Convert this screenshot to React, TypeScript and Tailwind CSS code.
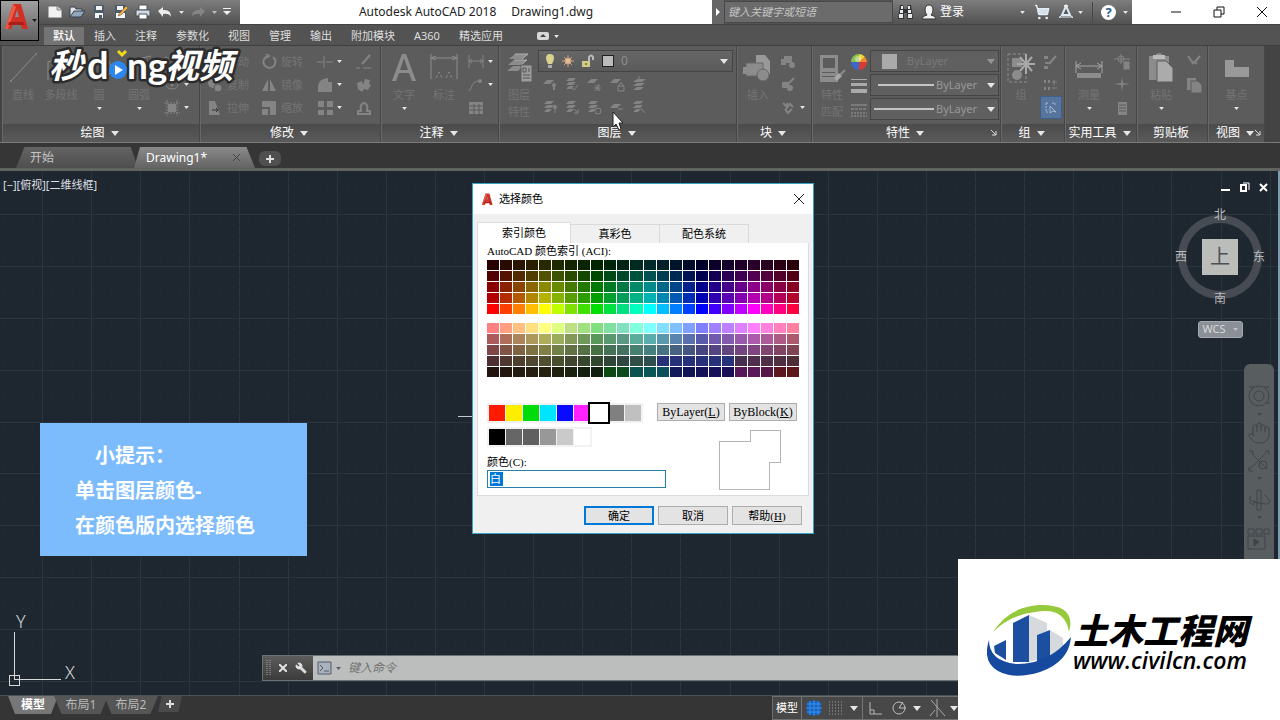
import React from 'react';
import { Hand, ShoppingCart, Wrench } from 'lucide-react';

const ui = 'font-["Noto_Sans","Noto_Sans_CJK_SC",sans-serif]';
const song = 'font-["Liberation_Serif","Noto_Sans_CJK_SC",serif]';

type IconName = keyof typeof icons;

const layerStack = (
  <g>
    <path d="M5 2h7l-3 3H2z" />
    <path d="M5 6h7l-3 3H2z" />
    <path d="M5 10h5l-3 3H2z" />
  </g>
);

// 16 x 16 drawings, filled with the current text colour
const icons = {
  ellipse: (
    <g fill="none" stroke="currentColor">
      <ellipse cx="8" cy="8" rx="6" ry="4" />
      <path d="M8 6v4M6 8h4" />
    </g>
  ),
  polyline: <path d="M1 3l5 2 2-3 7 6" fill="none" stroke="currentColor" />,
  hatch: (
    <g>
      <rect x="4" y="4" width="8" height="8" />
      <path d="M3 0v16M13 0v16M0 3h16M0 13h16" stroke="currentColor" strokeDasharray="2 1" />
    </g>
  ),
  move: <path d="M8 1l3 3H9v3h3V5l3 3-3 3V9H9v3h2l-3 3-3-3h2V9H4v2L1 8l3-3v2h3V4H5z" />,
  copy: (
    <g>
      <circle cx="6" cy="6" r="5" />
      <circle cx="11" cy="11" r="4" stroke="#5c5c5c" />
    </g>
  ),
  stretch: (
    <g>
      <path d="M2 1h6l5 14H2z" />
      <path d="M5 10h6m-2-2l2 2-2 2" stroke="#333" fill="none" />
    </g>
  ),
  rotate: <path d="M12 3a6 6 0 1 1-5-1M5 0l3 2-3 2" fill="none" stroke="currentColor" strokeWidth="2" />,
  mirror: (
    <g>
      <path d="M7 2v12H1z" />
      <path d="M9 2v12h6z" />
    </g>
  ),
  scale: (
    <g>
      <path d="M1 1h14v14H9V7H1z" />
      <rect x="1" y="9" width="6" height="6" />
    </g>
  ),
  trim: <path d="M0 8h7M9 8h7M7 2v12" fill="none" stroke="currentColor" />,
  fillet: <path d="M1 15V9q1-7 9-8h1v4h4v10z" />,
  array: <path d="M1 1h6v6H1zM10 1h6v6h-6zM1 10h6v5H1zM10 10h6v5h-6z" />,
  erase: (
    <g fill="none" stroke="currentColor">
      <path d="M6 10l8-9" strokeWidth="2" />
      <path d="M0 14h4M7 14h8" />
    </g>
  ),
  explode: <path d="M1 6l5-2 1 4 2-6 5 1-1 4 2 1-3 5-4-1-2 3-4-3z" />,
  offset: (
    <g fill="none" stroke="currentColor" strokeWidth="2">
      <path d="M2 14h12v-3h-3q1-5-1-7-2-2-4 0-2 2-1 7H2z" />
    </g>
  ),
  dimension: (
    <g fill="none" stroke="currentColor">
      <path d="M1 1v13M15 1v13M1 7h14M4 5L1 7l3 2M12 5l3 2-3 2" />
    </g>
  ),
  leader: (
    <g>
      <path d="M1 14l2-3q2-7 8-7" fill="none" stroke="currentColor" />
      <circle cx="12" cy="4" r="2" />
    </g>
  ),
  table: (
    <g>
      <rect x="1" y="2" width="14" height="12" />
      <path d="M1 6h14M1 10h14M6 4v10M11 4v10" stroke="#5c5c5c" />
    </g>
  ),
  layerOff: (
    <g>
      <path d="M5 4h7l-4 4H1z" />
      <circle cx="12" cy="9" r="2" />
      <path d="M12 9v5" stroke="currentColor" strokeWidth="2" />
    </g>
  ),
  layerIso: (
    <g>
      {layerStack}
      <path d="M8 12l2 2 4-5" fill="none" stroke="currentColor" />
    </g>
  ),
  layerFreeze: (
    <g>
      <path d="M5 3h7l-4 4H1z" />
      <path d="M8 12h7M12 8v7M9 9l5 6M14 9l-5 6" stroke="currentColor" />
    </g>
  ),
  layerLock: (
    <g>
      <path d="M5 3h7l-4 4H1z" />
      <path d="M9 10h6v5H9zM10 10q0-3 2-3t2 3" fill="none" stroke="currentColor" />
    </g>
  ),
  layerCurrent: (
    <g>
      <path d="M6 3h9l-4 3H2zM6 7h8l-4 3H2zM6 11h7l-4 3H2z" />
      <path d="M8 0v5M6 3l2 2 2-2" stroke="currentColor" fill="none" />
    </g>
  ),
  layerOn: (
    <g>
      {layerStack}
      <circle cx="13" cy="8" r="2" />
      <path d="M13 8v6" stroke="currentColor" />
    </g>
  ),
  layerUniso: (
    <g>
      {layerStack}
      <path d="M10 10l4 4m0-4v4h-4" stroke="currentColor" fill="none" />
    </g>
  ),
  layerThaw: (
    <g>
      {layerStack}
      <circle cx="12" cy="12" r="3" fill="#5c5c5c" stroke="currentColor" />
    </g>
  ),
  layerUnlock: (
    <g>
      <path d="M5 5h7l-4 4H1z" />
      <path d="M9 10h5" stroke="currentColor" />
    </g>
  ),
  layerMatch: (
    <g>
      {layerStack}
      <path d="M10 9l4 5" stroke="currentColor" />
    </g>
  ),
  blockCreate: (
    <g>
      <path d="M4 2h8v7H4z" />
      <path d="M1 5h5v6H1z" />
      <circle cx="12" cy="11" r="3" />
    </g>
  ),
  blockEdit: (
    <g>
      <path d="M2 5h7v6H2z" />
      <circle cx="10" cy="11" r="3" />
      <path d="M8 7l6-6" stroke="currentColor" strokeWidth="2" />
    </g>
  ),
  blockAttr: (
    <path d="M3 3l3 3 2-3M6 9l4-5 3 3M5 9l3 4 4-4" fill="none" stroke="currentColor" strokeWidth="2" />
  ),
  groupEdit: (
    <g>
      <path d="M2 2h4v3H2zM3 8h6v2H3zM2 12h4v3H2z" />
      <path d="M7 10l7-8" stroke="currentColor" strokeWidth="2" />
    </g>
  ),
  groupAdd: (
    <g>
      <path d="M2 3h2v3H2zM2 10h2v3H2zM6 3h2v3H6zM6 10h2v3H6z" />
      <path d="M10 5h5M12 3v5M10 11h5" stroke="currentColor" />
    </g>
  ),
  groupSelect: (
    <g fill="none" stroke="#a5b9d3">
      <path d="M3 3h3M3 3v9M3 12h3M9 3h3v3" strokeDasharray="2 1" />
      <path d="M7 6l6 6-3-1-3 2z" />
    </g>
  ),
  quickSelect: (
    <g fill="none" stroke="currentColor">
      <circle cx="7" cy="5" r="3" />
      <path d="M0 5h16M7 0v10" />
      <rect x="10" y="8" width="5" height="7" fill="currentColor" />
    </g>
  ),
  idPoint: <path d="M8 0l1 6 7 1-7 1-1 7-1-7-7-1 7-1z" />,
  calculator: (
    <g>
      <path d="M4 2h9v13H4z" />
      <path d="M5 5h7M5 8h7M5 11h7" stroke="#5c5c5c" />
    </g>
  ),
  cut: <path d="M2 2l5 7M14 2L8 9M6 10l2-2 3 2" fill="none" stroke="currentColor" strokeWidth="2" />,
  pages: (
    <g>
      <path d="M1 1h9v12H1z" />
      <path d="M5 4h7l4 4v8H5z" stroke="#5c5c5c" />
    </g>
  ),
};

function Caret({ big = false, className = '' }: { big?: boolean; className?: string }) {
  return (
    <svg className={`${big ? 'h-[5px] w-2' : 'h-[3px] w-[5px]'} shrink-0 ${className}`} viewBox="0 0 8 5" fill="#e6e6e6">
      <path d="M0 0h8L4 5z" />
    </svg>
  );
}

interface ToolProps {
  name: IconName;
  label?: string;
  caret?: boolean;
  active?: boolean;
}

function Tool({ name, label, caret, active }: ToolProps) {
  return (
    <button
      aria-label={label ?? name}
      className={`flex h-[23px] items-center gap-1 px-[2px] ${active ? 'border border-[#3c5f8f] bg-[#57759c]' : ''}`}
    >
      <svg className="size-4 shrink-0 text-[#848484]" viewBox="0 0 16 16" fill="currentColor">
        {icons[name]}
      </svg>
      {label && <span className="text-[11px] leading-4 whitespace-nowrap text-[#747474]">{label}</span>}
      {caret && <Caret />}
    </button>
  );
}

interface BigToolProps {
  lines: string[];
  caret?: boolean;
  width?: string;
  children: React.ReactNode;
}

function BigTool({ lines, caret, width = 'w-10', children }: BigToolProps) {
  return (
    <button className={`flex flex-col items-center ${width} shrink-0 pt-[6px]`}>
      <svg className="mb-[2px] size-8 text-[#8c8c8c]" viewBox="0 0 32 32" fill="currentColor">
        {children}
      </svg>
      {lines.map((line) => (
        <span key={line} className="text-[11px] leading-[17px] whitespace-nowrap text-[#747474]">
          {line}
        </span>
      ))}
      {caret && <Caret className="mt-1" />}
    </button>
  );
}

interface PanelProps {
  title: string;
  width: string;
  noCaret?: boolean;
  launcher?: boolean;
  children: React.ReactNode;
}

function Panel({ title, width, noCaret, launcher, children }: PanelProps) {
  return (
    <section className={`flex ${width} shrink-0 flex-col border-r border-[#464646] border-l border-l-[#686868] bg-[#5c5c5c]`}>
      <div className="flex h-[78px] overflow-hidden">{children}</div>
      <div className="grid h-[18px] grid-cols-[1fr_auto_1fr] items-center bg-linear-to-b from-[#4b4b4b] to-[#5a5a5a] pr-[3px] text-xs leading-4 whitespace-nowrap text-white">
        <span />
        <span className="flex items-center gap-[6px]">
          {title}
          {!noCaret && <Caret big />}
        </span>
        {launcher && (
          <svg className="size-[6px] justify-self-end" viewBox="0 0 6 6" fill="none" stroke="#ddd">
            <path d="M0 0l5 5M5 1v4H1" />
          </svg>
        )}
      </div>
    </section>
  );
}

function Column({ children, className = '' }: { children: React.ReactNode; className?: string }) {
  return <div className={`flex shrink-0 flex-col items-start pt-1 ${className}`}>{children}</div>;
}

function RedA({ className }: { className: string }) {
  return (
    <svg className={className} viewBox="0 0 24 28">
      <path d="M8 1h8l7 25h-6l-2-7H9l-3 7H0z" fill="#cf2f24" />
      <path d="M12 7l-2 7h4z" fill="#8d8d8d" />
      <path d="M8 1L0 26h3L11 4z" fill="#ee5a45" />
      <path d="M4 19h14l2 3H3z" fill="#a91e17" />
    </svg>
  );
}

function QuickAccess() {
  return (
    <div className="flex w-[201px] shrink-0 items-center gap-[6px] bg-linear-to-b from-[#7d7d7d] to-[#525252] pl-2">
      <button aria-label="新建">
        <svg className="size-4" viewBox="0 0 16 16">
          <path d="M1 2h9l5 4v8H1z" fill="#f2f2f2" stroke="#666" />
          <path d="M10 2v4h5" fill="#ccc" stroke="#888" />
        </svg>
      </button>
      <button aria-label="打开">
        <svg className="size-4" viewBox="0 0 16 16">
          <path d="M1 13V3h5l1 2h6v3" fill="#dfe4e8" stroke="#333f4c" />
          <path d="M1 13l4-6h11l-4 6z" fill="#8fa6bd" stroke="#333f4c" />
        </svg>
      </button>
      <button aria-label="保存">
        <svg className="size-4" viewBox="0 0 16 16">
          <path d="M3 1h10v14H3z" fill="#4b5b6c" />
          <path d="M5 2h6v4H5zM4 9h8v5H4z" fill="#f4f4f4" />
          <path d="M8 11h3v3H8z" fill="#4b5b6c" />
        </svg>
      </button>
      <button aria-label="另存为">
        <svg className="size-4" viewBox="0 0 16 16">
          <path d="M2 1h11v14H2z" fill="#4b5b6c" />
          <path d="M4 2h6v4H4zM3 9h9v5H3z" fill="#f4f4f4" />
          <path d="M6 10l7-8 2 2-7 7-3 1z" fill="#f0b64c" stroke="#6b4a14" strokeWidth="0.5" />
        </svg>
      </button>
      <button aria-label="打印">
        <svg className="size-4" viewBox="0 0 16 16">
          <path d="M4 1h8v5H4z" fill="#fff" stroke="#555" />
          <path d="M1 6h14v6H1z" fill="#d4dbe2" stroke="#46525f" />
          <path d="M4 10h8v5H4z" fill="#fff" stroke="#46525f" />
        </svg>
      </button>
      <button aria-label="放弃">
        <svg className="size-4" viewBox="0 0 16 16">
          <path d="M1 7l5-4v3q8-1 8 7-2-4-8-3v3z" fill="#ececec" />
        </svg>
      </button>
      <Caret />
      <button aria-label="重做">
        <svg className="size-4" viewBox="0 0 16 16">
          <path d="M15 7l-5-4v3q-8-1-8 7 2-4 8-3v3z" fill="#858585" />
        </svg>
      </button>
      <Caret className="opacity-70" />
      <button aria-label="自定义">
        <svg className="h-2 w-2" viewBox="0 0 8 8" fill="#f0f0f0">
          <path d="M0 0h8v1H0zM0 3h8L4 7z" />
        </svg>
      </button>
    </div>
  );
}

function InfoCenter() {
  return (
    <div className="flex w-[239px] shrink-0 items-center bg-linear-to-b from-[#7d7d7d] to-[#525252] pl-[5px] text-xs text-white">
      <svg className="h-4 w-[15px]" viewBox="0 0 15 16">
        <path d="M2 1h3l1 4h3l1-4h3l2 14H9V9H6v6H0z" fill="#2e3338" />
        <path d="M3 2h2v3H3zM10 2h2v3h-2zM1 10h4v4H1zM10 10h4v4h-4zM2 6h3v3H2zM10 6h3v3h-3z" fill="#e9e9e9" />
      </svg>
      <button className="ml-2 flex items-center gap-[3px]">
        <svg className="size-4" viewBox="0 0 16 16" fill="#f2f2f2" stroke="#333">
          <path d="M1 15q0-3 5-4-2-2-2-5 0-5 4-5t4 5q0 3-2 5 5 1 5 4z" />
        </svg>
        <span>登录</span>
      </button>
      <Caret className="ml-auto" />
      <button aria-label="应用商店" className="ml-[9px]">
        <ShoppingCart className="size-4" fill="#d5e0ea" stroke="#e4ecf3" strokeWidth={2} />
      </button>
      <svg className="ml-2 size-4" viewBox="0 0 16 16" fill="#4d5b68" stroke="#dfe8ef" strokeWidth="2">
        <path d="M8 2l4 9H4z" />
        <path d="M1 14l4-4M15 14l-4-4M1 13h14" strokeWidth="1" />
        <path d="M6 2h4" />
      </svg>
      <Caret className="ml-1" />
      <span className="ml-[9px] h-5 w-px bg-[#484848]" />
      <button
        aria-label="帮助"
        className="ml-2 size-[15px] rounded-full bg-white text-center text-[13px] leading-[15px] font-bold text-[#2a5d8f]"
      >
        ?
      </button>
      <Caret className="mr-1 ml-[7px]" />
    </div>
  );
}

function WindowControls() {
  return (
    <div className="flex w-[148px] shrink-0 items-center justify-between bg-white pr-1 pl-[38px]">
      <button aria-label="最小化">
        <svg className="size-3" viewBox="0 0 12 12" stroke="#111">
          <path d="M1 6h10" />
        </svg>
      </button>
      <button aria-label="还原">
        <svg className="size-3" viewBox="0 0 12 12" stroke="#111" fill="none">
          <path d="M1 4h7v7H1zM4 4V1h7v7H8" />
        </svg>
      </button>
      <button aria-label="关闭" className="mr-2">
        <svg className="size-3" viewBox="0 0 12 12" stroke="#111">
          <path d="M1 1l10 10M11 1L1 11" />
        </svg>
      </button>
    </div>
  );
}

const menuTabs = ['默认', '插入', '注释', '参数化', '视图', '管理', '输出', '附加模块', 'A360', '精选应用'];

function Header() {
  return (
    <header className="flex bg-[#535353]">
      <button
        aria-label="应用程序菜单"
        className="flex h-[41px] w-[39px] shrink-0 items-center gap-[3px] border border-black bg-linear-to-b from-[#a0a0a0] to-[#616161] pl-1"
      >
        <RedA className="mb-2 h-7 w-6" />
        <Caret className="invert" />
      </button>
      <div className="flex min-w-0 flex-1 flex-col">
        <div className="flex h-6">
          <QuickAccess />
          <h1 className="flex min-w-0 flex-1 items-center justify-center gap-[15px] overflow-hidden bg-white text-xs whitespace-nowrap text-[#222]">
            <span>Autodesk AutoCAD 2018</span>
            <span>Drawing1.dwg</span>
          </h1>
          <button aria-label="展开" className="flex w-3 shrink-0 items-center justify-center bg-[#666]">
            <svg className="h-2 w-1" viewBox="0 0 4 8" fill="#fff">
              <path d="M0 0l4 4-4 4z" />
            </svg>
          </button>
          <input
            aria-label="搜索"
            placeholder="键入关键字或短语"
            className="my-px w-[169px] shrink-0 border border-[#484848] bg-[#6b6b6b] px-[3px] text-[11px] italic placeholder:text-[#c4c4c4]"
          />
          <InfoCenter />
          <WindowControls />
        </div>
        <nav className="flex h-[21px] items-end gap-px border-t border-[#444] pl-[5px] text-[11px] text-[#dedede]">
          {menuTabs.map((tab, i) => (
            <button
              key={tab}
              className={`h-[18px] px-[9px] leading-4 whitespace-nowrap ${i === 0 ? 'bg-[#747474] font-medium text-white' : ''}`}
            >
              {tab}
            </button>
          ))}
          <button aria-label="功能区" className="ml-6 flex h-[18px] items-center gap-[5px]">
            <svg className="h-2 w-3" viewBox="0 0 12 8">
              <rect width="12" height="8" rx="2" fill="#d8d8d8" />
              <path d="M3 5l3-3 3 3z" fill="#444" />
            </svg>
            <Caret />
          </button>
        </nav>
      </div>
    </header>
  );
}

function PropertySelect({ kind }: { kind: 'color' | 'weight' | 'line' }) {
  return (
    <div className="flex h-[22px] w-[129px] items-center border border-[#444] bg-[#606060] px-[3px]">
      {kind === 'color' && <span className="mr-2 ml-2 size-[15px] bg-[#aaa]" />}
      {kind === 'weight' && <span className="ml-1 h-[2px] w-14 bg-[#c4c4c4]" />}
      {kind === 'line' && <span className="h-[2px] w-15 bg-[#c4c4c4]" />}
      <select
        aria-label={kind}
        className={`min-w-0 flex-1 appearance-none bg-transparent px-[2px] text-[11px] leading-4 ${
          kind === 'color' ? 'text-[#797979]' : 'text-[#989898]'
        }`}
      >
        <option>ByLayer</option>
      </select>
      <Caret big className={kind === 'color' ? 'opacity-40' : ''} />
    </div>
  );
}

function Ribbon() {
  return (
    <div className="flex h-[98px] overflow-hidden border-t border-b border-t-[#3f3f3f] border-b-[#7b7b7b] bg-[#444] pl-[2px]">
      <Panel title="绘图" width="w-[198px]">
        <BigTool lines={['直线']}>
          <path d="M5 28L28 3" stroke="currentColor" />
          <circle cx="4" cy="29" r="1" />
          <circle cx="29" cy="2" r="1" />
        </BigTool>
        <BigTool lines={['多段线']} width="w-9">
          <path d="M3 28V10l12-4 3 12 10-4" fill="none" stroke="currentColor" />
        </BigTool>
        <BigTool lines={['圆']} caret>
          <circle cx="16" cy="16" r="12" fill="none" stroke="currentColor" />
        </BigTool>
        <BigTool lines={['圆弧']} caret>
          <path d="M4 28Q6 6 28 4" fill="none" stroke="currentColor" />
        </BigTool>
        <Column className="pl-[3px]">
          <Tool name="polyline" caret />
          <Tool name="ellipse" caret />
          <Tool name="hatch" caret />
        </Column>
      </Panel>

      <Panel title="修改" width="w-[181px]">
        <Column className="pl-1">
          <Tool name="move" label="移动" />
          <Tool name="copy" label="复制" />
          <Tool name="stretch" label="拉伸" />
        </Column>
        <Column className="pl-2">
          <Tool name="rotate" label="旋转" />
          <Tool name="mirror" label="镜像" />
          <Tool name="scale" label="缩放" />
        </Column>
        <Column className="pl-[10px]">
          <Tool name="trim" caret />
          <Tool name="fillet" caret />
          <Tool name="array" caret />
        </Column>
        <Column className="pl-[10px]">
          <Tool name="erase" />
          <Tool name="explode" />
          <Tool name="offset" />
        </Column>
      </Panel>

      <Panel title="注释" width="w-[118px]">
        <BigTool lines={['文字']} caret width="w-11">
          <path d="M14 2h4l10 27h-4l-3-8H11l-3 8H4zM16 6l-4 12h8z" fillRule="evenodd" />
        </BigTool>
        <BigTool lines={['标注']} width="w-9">
          <path d="M3 2v25M29 2v25M3 6h26M8 4L3 6l5 2M24 4l5 2-5 2" fill="none" stroke="currentColor" />
          <path d="M8 26l3-6 3 6M18 26l3-6 3 6" fill="none" stroke="currentColor" strokeDasharray="3 2" />
        </BigTool>
        <Column className="pl-1">
          <Tool name="dimension" caret />
          <Tool name="leader" caret />
          <Tool name="table" />
        </Column>
      </Panel>

      <Panel title="图层" width="w-[238px]">
        <BigTool lines={['图层', '特性']} width="w-[38px]">
          <path d="M12 2h13l-6 5H6zM11 8h13l-6 5H5zM10 14h10l-5 5H4z" />
          <path d="M12 2h13l-6 5M11 8h13l-6 5" fill="none" stroke="#b0b0b0" />
          <rect x="18" y="13" width="11" height="17" fill="#9c9c9c" stroke="#5c5c5c" />
          <path d="M20 16h3v4h-3zM26 16v4M20 23h7M20 26h7" stroke="#555" fill="none" />
        </BigTool>
        <div className="flex flex-1 flex-col pt-1 pr-[3px]">
          <div className="flex h-[22px] items-center gap-[7px] border border-[#444] bg-linear-to-b from-[#666] to-[#5a5a5a] pr-1 pl-[6px]">
            <svg className="h-4 w-[10px]" viewBox="0 0 10 16">
              <path d="M1 5a4 4 0 0 1 8 0q0 2-2 6H3Q1 7 1 5z" fill="#d9d38f" />
              <path d="M3 12h4v3H3z" fill="#aaa" />
            </svg>
            <svg className="size-3" viewBox="0 0 12 12" stroke="#c9a182">
              <path d="M6 0v12M0 6h12M2 2l8 8M10 2l-8 8" />
              <circle cx="6" cy="6" r="3" fill="#e3ba93" />
            </svg>
            <svg className="h-4 w-[14px]" viewBox="0 0 14 16">
              <path d="M1 8h8v6H1z" fill="#cfcc86" />
              <path d="M8 8V4q2-3 4 0v3" fill="none" stroke="#bbb" strokeWidth="2" />
              <path d="M5 10v2" stroke="#333" />
            </svg>
            <span className="size-3 border border-[#222] bg-[#bbb]" />
            <select aria-label="图层" className="min-w-0 flex-1 appearance-none bg-transparent text-xs leading-4 text-[#8d8d8d]">
              <option>0</option>
            </select>
            <Caret big />
          </div>
          <div className="grid w-[113px] grid-cols-5 pl-[2px]">
            <Tool name="layerOff" />
            <Tool name="layerIso" />
            <Tool name="layerFreeze" />
            <Tool name="layerLock" />
            <Tool name="layerCurrent" />
            <Tool name="layerOn" />
            <Tool name="layerUniso" />
            <Tool name="layerThaw" />
            <Tool name="layerUnlock" />
            <Tool name="layerMatch" />
          </div>
        </div>
      </Panel>

      <Panel title="块" width="w-[75px]">
        <BigTool lines={['插入']}>
          <path d="M14 3h9l5 6v13H14z" fill="#999" />
          <path d="M4 11h17v13H4z" stroke="#666" />
          <path d="M1 15h5v7H1z" />
          <circle cx="21" cy="23" r="6" stroke="#666" />
        </BigTool>
        <Column>
          <Tool name="blockCreate" />
          <Tool name="blockEdit" />
          <Tool name="blockAttr" caret />
        </Column>
      </Panel>

      <Panel title="特性" width="w-[189px]" launcher>
        <BigTool lines={['特性', '匹配']} width="w-[38px]">
          <path d="M4 3h18v27H4zM7 6v10h12V6zM6 20h13v1H6zM6 24h13v1H6z" fillRule="evenodd" />
          <path d="M18 26l5-5 3 3-5 5z" fill="#aaa" />
          <path d="M24 23l5-5" stroke="currentColor" strokeWidth="2" />
        </BigTool>
        <div className="flex flex-col items-center gap-2 pt-2 pr-[3px]">
          <svg className="size-4" viewBox="0 0 16 16">
            <path d="M8 8V0a8 8 0 0 0-8 8z" fill="#8bc34a" />
            <path d="M8 8V0a8 8 0 0 1 6 3z" fill="#f4d63c" />
            <path d="M8 8l6-5a8 8 0 0 1 2 5z" fill="#f08a2c" />
            <path d="M8 8h8a8 8 0 0 1-8 8z" fill="#d63b34" />
            <path d="M8 8v8a8 8 0 0 1-8-8z" fill="#3b67c9" />
            <circle cx="7" cy="5" r="3" fill="#fff" opacity="0.4" />
          </svg>
          <svg className="size-4" viewBox="0 0 16 16" fill="#aaa">
            <path d="M0 1h16v1H0zM0 5h16v3H0zM0 11h16v4H0z" />
          </svg>
          <svg className="size-4" viewBox="0 0 16 16" stroke="#999">
            <path d="M0 3h16" />
            <path d="M0 7h16" strokeDasharray="3 1" />
            <path d="M0 11h16M0 14h16" strokeDasharray="2 1" />
          </svg>
        </div>
        <div className="flex flex-col gap-[2px] pt-1">
          <PropertySelect kind="color" />
          <PropertySelect kind="weight" />
          <PropertySelect kind="line" />
        </div>
      </Panel>

      <Panel title="组" width="w-16">
        <BigTool lines={['组']} width="w-[38px]">
          <path d="M3 2h18v28H3z" fill="none" stroke="currentColor" strokeDasharray="3 2" />
          <path d="M7 6h10v9H7z" />
          <circle cx="12" cy="23" r="5" />
          <path d="M12 12h18M21 2v20M15 5l12 14M27 5L15 19" stroke="#a9a9a9" strokeWidth="2" />
        </BigTool>
        <Column>
          <Tool name="groupEdit" />
          <Tool name="groupAdd" />
          <Tool name="groupSelect" active />
        </Column>
      </Panel>

      <Panel title="实用工具" width="w-[72px]">
        <BigTool lines={['测量']} caret width="w-[46px]">
          <path d="M3 9v12M29 9v12M3 14h26M8 11l-5 3 5 3M24 11l5 3-5 3" fill="none" stroke="#a5a5a5" />
          <path d="M4 21h24v5H4z" />
        </BigTool>
        <Column>
          <Tool name="quickSelect" />
          <Tool name="idPoint" />
          <Tool name="calculator" />
        </Column>
      </Panel>

      <Panel title="剪贴板" width="w-[71px]" noCaret>
        <BigTool lines={['粘贴']} caret width="w-[46px]">
          <path d="M4 4h6q1-3 4-3t4 3h6v24H4z" />
          <path d="M8 3h12v4H8z" fill="#bbb" />
          <path d="M12 9h9l7 7v14H12z" fill="#ababab" stroke="#5c5c5c" />
        </BigTool>
        <Column>
          <Tool name="cut" />
          <Tool name="pages" />
        </Column>
      </Panel>

      <Panel title="视图" width="w-[57px]" launcher>
        <BigTool lines={['基点']} caret width="w-[55px]">
          <path d="M4 8h9v7h15v10H4z" fill="#999" />
        </BigTool>
      </Panel>
    </div>
  );
}

function FileTabs() {
  return (
    <div className="flex h-7 items-end border-b-3 border-[#61635f] bg-[#363636] pl-4 text-xs text-[#c5c5c5]">
      <button className="h-[21px] w-[122px] bg-linear-to-b from-[#646464] to-[#4e4e4e] pl-[14px] text-left leading-5 [clip-path:polygon(7%_0,94%_0,100%_100%,0_100%)]">
        开始
      </button>
      <div className="-ml-1 flex h-[21px] w-[121px] items-center bg-linear-to-b from-[#8a8a8a] to-[#646464] pr-[15px] pl-3 text-white [clip-path:polygon(5%_0,93%_0,100%_100%,0_100%)]">
        <button>Drawing1*</button>
        <button aria-label="关闭图形" className="ml-auto">
          <svg className="size-[7px]" viewBox="0 0 7 7" stroke="#444">
            <path d="M0 0l7 7M7 0L0 7" />
          </svg>
        </button>
      </div>
      <button aria-label="新图形" className="mb-[2px] ml-1 flex h-[15px] w-[22px] items-center justify-center rounded-md bg-[#505050]">
        <svg className="size-2" viewBox="0 0 8 8" stroke="#ddd" strokeWidth="2">
          <path d="M0 4h8M4 0v8" />
        </svg>
      </button>
    </div>
  );
}

const gridX = Array.from({ length: 300 }, (_, i) => Math.round((i * 491) / 50) - 7);
const gridY = Array.from({ length: 150 }, (_, i) => Math.round((i * 519) / 50) - 9);

function DrawingGrid() {
  return (
    <svg className="absolute inset-0 h-full w-full" shapeRendering="crispEdges">
      {gridX.map((x, i) => (
        <rect key={x} x={x} y="0" width="1" height="100%" fill={i % 5 === 0 ? '#2b353e' : '#202931'} />
      ))}
      {gridY.map((y, i) => (
        <rect key={y} x="0" y={y} width="100%" height="1" fill={i % 5 === 0 ? '#2b353e' : '#202931'} />
      ))}
    </svg>
  );
}

function hsv(hue: number, sat: number, value: number) {
  const channel = (n: number) => {
    const k = (n + hue / 60) % 6;
    return Math.round(255 * value * (1 - sat * Math.max(0, Math.min(k, 4 - k, 1))));
  };
  const [r, g, b] = [channel(5), channel(3), channel(1)];
  // pure greens are shown a little darker
  const dim = hue > 75 && hue < 165 ? 0.88 : 1;
  return `rgb(${r}, ${Math.round(g * dim)}, ${b})`;
}

const hues = Array.from({ length: 24 }, (_, i) => i * 15);
const fullRows = [0.16, 0.32, 0.54, 0.7, 1];
const paleRows: [number, number][] = [
  [0.5, 1],
  [0.48, 0.68],
  [0.46, 0.5],
  [0.4, 0.31],
];
const lastRow = [
  ...['#22130f', '#22160f', '#241c10', '#261e10', '#26220f', '#20200f', '#1c2210', '#152010', '#122010'],
  ...['#0c4a14', '#0c4a1c', '#0b5350', '#0a5555', '#0b4f5a', '#121b58', '#121458', '#131158', '#151058', '#1b1058'],
  ...['#571858', '#5a1a5a', '#541646', '#5c1620', '#5c1818'],
];

function PaletteCells({ colors }: { colors: string[] }) {
  return (
    <>
      {colors.map((color, i) => (
        <button key={i} aria-label={color} className="h-[10px]" style={{ backgroundColor: color }} />
      ))}
    </>
  );
}

function Swatch({ color, selected }: { color: string; selected?: boolean }) {
  return (
    <button
      aria-label={color}
      className={`size-4 ${selected ? 'z-10 ring-1 ring-white outline-2 outline-offset-1 outline-black' : ''}`}
      style={{ backgroundColor: color }}
    />
  );
}

const mainSwatches = ['#ff1a00', '#ffee00', '#00dc0a', '#00e5ff', '#0a0aff', '#ff22ff', '#ffffff', '#808080', '#c0c0c0'];
const graySwatches = ['#000000', '#666666', '#606060', '#989898', '#cacaca', '#ffffff'];

function ColorDialog() {
  return (
    <div
      role="dialog"
      aria-label="选择颜色"
      className={`absolute top-[183px] left-[472px] w-[342px] border border-[#3aa3c4] bg-[#f0f0f0] text-[11px] text-black ${song}`}
    >
      <div className="flex h-[30px] items-center bg-white px-2">
        <RedA className="h-[13px] w-[13px]" />
        <span className={`ml-[5px] ${ui}`}>选择颜色</span>
        <button aria-label="关闭" className="ml-auto">
          <svg className="size-3" viewBox="0 0 12 12" stroke="#222">
            <path d="M1 1l10 10M11 1L1 11" />
          </svg>
        </button>
      </div>

      <div className="flex items-end px-1 pt-2 leading-[18px]">
        <button className="h-[21px] w-[94px] border border-b-0 border-[#dcdcdc] bg-white leading-4">索引颜色</button>
        <button className="h-[19px] w-[89px] border border-b-0 border-l-0 border-[#d9d9d9]">真彩色</button>
        <button className="h-[19px] w-[89px] border border-b-0 border-l-0 border-[#d9d9d9]">配色系统</button>
      </div>

      <div className="mx-1 h-[253px] border border-t-0 border-[#dcdcdc] bg-white pr-[11px] pl-[9px]">
        <p className="mb-px leading-4">AutoCAD 颜色索引 (ACI):</p>
        <div className="grid w-[312px] grid-cols-24 gap-px">
          {fullRows.map((value) => (
            <PaletteCells key={value} colors={hues.map((hue) => hsv(hue, 1, value))} />
          ))}
        </div>
        <div className="mt-[9px] grid w-[312px] grid-cols-24 gap-px">
          {paleRows.map(([sat, value], row) => (
            <PaletteCells
              key={value}
              colors={hues.map((hue, i) => (row === 3 && i > 12 && i < 19 ? '#26317a' : hsv(hue, sat, value)))}
            />
          ))}
          <PaletteCells colors={lastRow} />
        </div>

        <div className="mt-[26px] flex items-start justify-between">
          <div className="w-40">
            <div className="flex w-fit gap-px bg-[#f2f2f2] p-[2px]">
              {mainSwatches.map((color) => (
                <Swatch key={color} color={color} selected={color === '#ffffff'} />
              ))}
            </div>
            <div className="mt-1 flex w-fit gap-px bg-[#f2f2f2] p-[2px]">
              {graySwatches.map((color) => (
                <Swatch key={color} color={color} />
              ))}
            </div>
            <label htmlFor="color" className="mt-[7px] block leading-4">
              颜色(C):
            </label>
            <div className="flex h-[18px] w-[179px] items-center border border-[#2d7ea6] bg-white px-[2px]">
              <input id="color" defaultValue="白" className="h-[14px] w-[13px] bg-[#0078d7] text-[11px] text-white outline-none" />
            </div>
          </div>
          <div className="flex flex-col items-end">
            <div className="flex gap-1 text-xs">
              <button className="h-[18px] w-[68px] border border-[#adadad] bg-[#e3e3e3] leading-4">
                ByLayer(<u>L</u>)
              </button>
              <button className="h-[18px] w-[68px] border border-[#adadad] bg-[#e3e3e3] leading-4">
                ByBlock(<u>K</u>)
              </button>
            </div>
            <svg className="mt-2 mr-4 h-[61px] w-[63px]" viewBox="0 0 63 61" fill="none" stroke="#b5b5b5" shapeRendering="crispEdges">
              <path d="M1 12h31V1h30v32H51v27H1z" />
            </svg>
          </div>
        </div>
      </div>

      <div className="flex justify-end gap-1 pt-[10px] pr-[11px] pb-2">
        <button className="h-[19px] w-[70px] border-2 border-[#0078d7] bg-[#e3e3e3] leading-[14px]">确定</button>
        <button className="h-[19px] w-[70px] border border-[#adadad] bg-[#e3e3e3] leading-4">取消</button>
        <button className="h-[19px] w-[70px] border border-[#adadad] bg-[#e3e3e3] leading-4">
          帮助(<u>H</u>)
        </button>
      </div>
    </div>
  );
}

function ViewCube() {
  return (
    <div className="absolute top-[35px] right-3 flex w-[92px] flex-col items-center text-xs text-[#b8bbbd]">
      <div className="grid h-[102px] w-full grid-cols-[14px_1fr_14px] items-center justify-items-center">
        <span className="z-10">西</span>
        <div className="relative flex h-[102px] flex-col items-center justify-between leading-[18px]">
          <svg className="absolute top-[9px] left-1/2 size-[84px] -translate-x-1/2" viewBox="0 0 84 84">
            <circle cx="42" cy="42" r="38" fill="none" stroke="#474b53" strokeWidth="8" />
          </svg>
          <span className="z-10">北</span>
          <button className="z-10 size-9 bg-[#bbbdbb] text-xl leading-9 text-[#4c5054]">上</button>
          <span className="z-10">南</span>
        </div>
        <span className="z-10">东</span>
      </div>
      <button className="mt-[13px] flex h-[17px] w-[45px] items-center rounded-[3px] border border-[#a5a8ae] bg-[#8b8f97] px-1 text-[11px] text-[#d8d8d8]">
        WCS
        <Caret className="ml-auto opacity-60" />
      </button>
    </div>
  );
}

function NavigationBar() {
  return (
    <div className="absolute top-[193px] right-1 flex h-[214px] w-[30px] flex-col items-center rounded-md bg-[#585d60] pt-5 text-[#3f4448]">
      <svg className="size-6" viewBox="0 0 24 24" fill="none" stroke="currentColor">
        <circle cx="12" cy="12" r="10" />
        <circle cx="12" cy="12" r="5" />
        <path d="M2 3h5M17 3h5M19 19h4" />
      </svg>
      <Caret className="my-[5px] opacity-30 invert" />
      <Hand className="size-6" strokeWidth={1} />
      <svg className="mt-1 size-6" viewBox="0 0 24 24" fill="none" stroke="currentColor">
        <path d="M4 4l16 16M20 3L3 20" />
        <circle cx="16" cy="16" r="4" />
        <path d="M2 2h4v4M22 6V2h-4M2 18v4h4" />
      </svg>
      <Caret className="my-1 opacity-30 invert" />
      <svg className="mt-1 size-6" viewBox="0 0 24 24" fill="none" stroke="currentColor">
        <path d="M10 2h4v20h-4zM4 8q-6 4 8 7t10-3-5-5M2 14l4 3 2-4" />
      </svg>
      <Caret className="my-1 opacity-30 invert" />
      <svg className="mt-1 size-6" viewBox="0 0 24 24" fill="none" stroke="currentColor">
        <path d="M1 2h6v5H1zM9 2h6v5H9zM17 2h5v5h-5zM1 9h17v13H1z" />
        <path d="M7 12v7l5-4z" fill="currentColor" />
      </svg>
    </div>
  );
}

function CommandLine() {
  return (
    <div className="absolute right-0 bottom-[14px] left-[262px] flex h-[26px] items-center border border-[#6d7072] bg-[#bcbebd]">
      <div className="flex h-full w-[50px] items-center gap-2 bg-linear-to-b from-[#5c5c5c] to-[#3c3c3c] pl-[3px] text-[#e2e2e2]">
        <svg className="h-4 w-[5px]" viewBox="0 0 5 16" stroke="#a5a5a5">
          <path d="M1 0v16M4 0v16" strokeDasharray="1 1" />
        </svg>
        <svg className="size-2" viewBox="0 0 8 8" stroke="currentColor" strokeWidth="2">
          <path d="M0 0l8 8M8 0L0 8" />
        </svg>
        <Wrench className="size-3 -scale-x-100" fill="currentColor" />
      </div>
      <svg className="ml-1 h-[14px] w-4" viewBox="0 0 16 14" fill="none" stroke="#4e5c6e">
        <path d="M1 1h13v12H1z" fill="#a9b1ba" />
        <path d="M3 4l3 3-3 3M7 10h5" />
      </svg>
      <Caret className="ml-[3px] opacity-60 invert" />
      <input
        aria-label="命令"
        placeholder="键入命令"
        className="ml-[7px] min-w-0 flex-1 bg-transparent text-xs italic outline-none placeholder:text-[#6f7272]"
      />
    </div>
  );
}

function UcsIcon() {
  return (
    <svg className={`absolute bottom-[9px] left-2 h-[84px] w-20 ${ui}`} viewBox="0 0 80 84">
      <g fill="none" stroke="#d6d8da" shapeRendering="crispEdges">
        <path d="M6 30v47M6 77h47" />
        <rect x="1" y="73" width="10" height="10" />
      </g>
      <g fill="#d6d8da" fontSize="18" fontWeight="300">
        <text x="8" y="26">Y</text>
        <text x="57" y="77">X</text>
      </g>
    </svg>
  );
}

function Canvas() {
  return (
    <main className="relative flex-1 overflow-hidden border-r-2 border-[#7e9cb0] bg-[#1e272f]">
      <DrawingGrid />
      <p className="absolute top-[6px] left-[3px] text-[11px] leading-4 text-[#dcdfe1]">[−][俯视][二维线框]</p>
      <span className="absolute top-[245px] left-[458px] h-px w-14 bg-[#c5c9cc]" />
      <div className="absolute top-[11px] right-[10px] flex items-center gap-[9px] text-white">
        <svg className="size-[10px]" viewBox="0 0 10 10" stroke="currentColor" strokeWidth="2">
          <path d="M0 8h9" />
        </svg>
        <svg className="size-[10px]" viewBox="0 0 10 10" stroke="currentColor" fill="none">
          <path d="M1 3h5v6H1z" strokeWidth="2" />
          <path d="M3 1h6v7" />
        </svg>
        <svg className="size-[9px]" viewBox="0 0 9 9" stroke="currentColor" strokeWidth="2">
          <path d="M1 1l7 7M8 1L1 8" />
        </svg>
      </div>
      <ViewCube />
      <NavigationBar />
      <UcsIcon />
      <CommandLine />
      <aside className="absolute top-[252px] left-10 w-[267px] bg-[#7cbcfd] px-[35px] pt-[15px] pb-[13px] text-xl leading-[35px] font-bold whitespace-nowrap text-white">
        <p className="pl-5">小提示：</p>
        <p>单击图层颜色-</p>
        <p>在颜色版内选择颜色</p>
      </aside>
    </main>
  );
}

function StatusBar() {
  return (
    <footer className="flex h-[25px] items-start border-t border-[#4c5154] bg-[#353535] pl-2 text-xs text-[#b9b9b9]">
      {['模型', '布局1', '布局2'].map((tab, i) => (
        <button
          key={tab}
          className={`-mr-1 h-[18px] [clip-path:polygon(0_0,100%_0,86%_100%,14%_100%)] ${
            i === 0 ? 'w-[50px] bg-[#777] font-bold text-white' : 'w-[54px] bg-[#555]'
          }`}
        >
          {tab}
        </button>
      ))}
      <button
        aria-label="新建布局"
        className="ml-1 flex h-4 w-6 items-center justify-center bg-[#4a4a4a] [clip-path:polygon(15%_0,100%_0,85%_100%,0_100%)]"
      >
        <svg className="size-2" viewBox="0 0 8 8" stroke="#ddd" strokeWidth="2">
          <path d="M0 4h8M4 0v8" />
        </svg>
      </button>
      <div className="ml-auto flex h-6 w-[508px] items-center border border-[#707070] bg-[#484848] text-white">
        <button className="h-full border-r border-[#777] px-[3px] text-[11px]">模型</button>
        <svg className="ml-1 size-4" viewBox="0 0 16 16">
          <rect x="1" y="1" width="14" height="14" rx="4" fill="#1262c4" />
          <path d="M4 1v14M8 0v16M12 1v14M1 4h14M0 8h16M1 12h14" stroke="#3d8fe8" />
        </svg>
        <svg className="ml-[6px] size-4" viewBox="0 0 16 16" stroke="#a0a0a0">
          <path d="M1 2h14M1 5h14M1 8h14M1 11h14M1 14h14" strokeDasharray="1 2" />
        </svg>
        <Caret big className="ml-[6px]" />
        <span className="ml-1 h-full w-px bg-[#777]" />
        <svg className="ml-[6px] size-[14px]" viewBox="0 0 14 14" fill="none" stroke="#b5b5b5">
          <path d="M1 1v12h12M1 9h4v4" />
        </svg>
        <svg className="ml-2 size-4" viewBox="0 0 16 16" fill="none" stroke="#c0c0c0">
          <circle cx="8" cy="8" r="6" />
          <path d="M8 8h7M8 8l4-6" />
        </svg>
        <Caret big className="ml-[6px]" />
        <svg className="ml-2 h-[18px] w-[18px]" viewBox="0 0 18 18" fill="none" stroke="#a8a8a8">
          <path d="M2 1l14 16M8 0v18M1 17l5-6" />
        </svg>
        <Caret big className="ml-[3px]" />
      </div>
    </footer>
  );
}

// "miaodong" video badge over the ribbon
function VideoBadge() {
  return (
    <svg className="pointer-events-none absolute top-[42px] left-[46px] h-[52px] w-[196px] font-['Lato','Noto_Sans_CJK_SC',sans-serif]" viewBox="0 0 196 52">
      <g fill="#fff" stroke="#2c2c2c" strokeWidth="5" strokeLinejoin="round" paintOrder="stroke" fontWeight="700">
        <text x="3" y="36" fontSize="34" fontStyle="italic">秒</text>
        <text x="41" y="37" fontSize="38">d</text>
        <text x="81" y="37" fontSize="37">ng</text>
        <text x="119" y="36" fontSize="34" fontStyle="italic">视频</text>
      </g>
      <circle cx="72" cy="28" r="9" fill="#2b86ef" />
      <path d="M69 23l8 5-8 5z" fill="#fff" />
      <path d="M72 9l4 4 4-4" fill="none" stroke="#f3d91c" strokeWidth="3" />
    </svg>
  );
}

function SiteLogo() {
  return (
    <div className="absolute right-0 bottom-0 flex h-[161px] w-[322px] items-center bg-white pl-[29px]">
      <svg className="h-[72px] w-[86px] shrink-0" viewBox="0 0 86 72">
        <path d="M26 19l16-8v47H26z" fill="#1c4f9f" />
        <path d="M42 11l18 8v8l-10 4v25l-8 2z" fill="#d7dadd" />
        <path d="M50 31l13-5v30l-13 2z" fill="#1c4f9f" />
        <path d="M63 26l13 8v14l-13 8z" fill="#d7dadd" />
        <path d="M7 42l12-6v20L8 49z" fill="#1c4f9f" />
        <path d="M6 28Q22 3 52 1q38-1 30 27-4-26-34-20Q23 11 6 28z" fill="#97c93c" />
        <path d="M2 36Q2 57 29 60q32 1 55-27-2 25-31 35-26 8-42-1Q-5 58 2 36z" fill="#164a9e" />
      </svg>
      <div className="flex flex-col pt-1 whitespace-nowrap text-black italic">
        <span className="text-[35px] leading-9 font-black">土木工程网</span>
        <span className="font-['Open_Sans',sans-serif] text-[23px] leading-[22px] font-semibold">www.civilcn.com</span>
      </div>
    </div>
  );
}

export default function App() {
  return (
    <div className={`relative flex min-h-screen w-full flex-col overflow-hidden bg-[#353535] ${ui}`}>
      <Header />
      <Ribbon />
      <FileTabs />
      <Canvas />
      <StatusBar />
      <VideoBadge />
      <svg className="pointer-events-none absolute top-[111px] left-[612px] h-5 w-3" viewBox="0 0 12 20">
        <path d="M1 1v15l3-3 3 6 2-1-2-6h4z" fill="#fff" stroke="#222" />
      </svg>
      <ColorDialog />
      <SiteLogo />
    </div>
  );
}
